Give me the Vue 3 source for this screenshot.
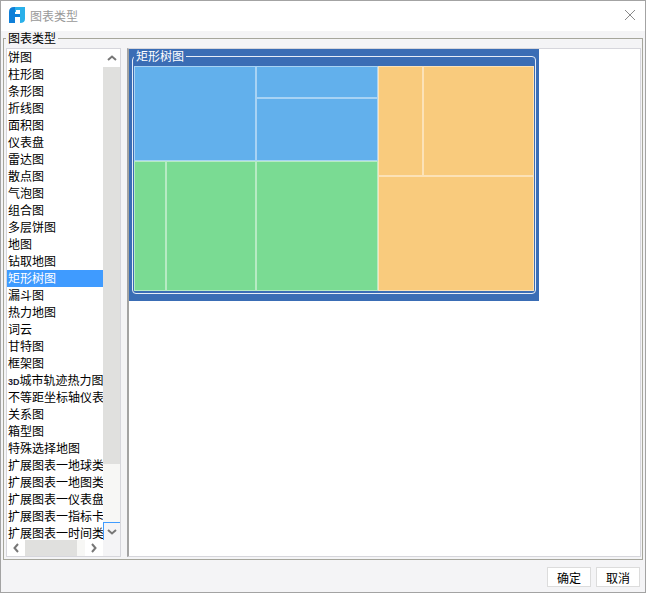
<template>
  <div class="dialog">
    <div class="titlebar">
      <svg class="logo" width="16" height="16" viewBox="0 0 16 16">
        <path d="M0 5 Q0 0 5 0 H6 V16 H0 Z" fill="#0f7fd8" />
        <path d="M6 7 H11 V10 H6 Z" fill="#0f7fd8" />
        <path d="M6 0 H16 V5 H6 Z" fill="#29b0ea" />
        <path d="M7 3 H11 V7 H7 Z" fill="#fff" />
        <path d="M11 3 H16 V12 Q16 16 11 16 Z" fill="#29b0ea" />
      </svg>
      <span class="title">图表类型</span>
      <svg class="close" width="12" height="12" viewBox="0 0 12 12">
        <path d="M1 1 L11 11 M11 1 L1 11" stroke="#8a8a8a" stroke-width="1" fill="none" />
      </svg>
    </div>

    <div class="content">
      <fieldset class="group">
        <legend>图表类型</legend>
        <div class="group-body">
          <div class="listbox">
            <div class="list-main">
              <ul class="items">
                <li v-for="name in chartTypes" :key="name" :class="{ selected: name === selected }">
                  <template v-if="name.startsWith('3D')"><span class="small">3D</span>{{ name.slice(2) }}</template>
                  <template v-else>{{ name }}</template>
                </li>
              </ul>
              <div class="vscroll">
                <div class="sb-btn">
                  <svg width="10" height="6" viewBox="0 0 10 6"><path d="M1 5 L5 1.5 L9 5" stroke="#777" stroke-width="2" fill="none" /></svg>
                </div>
                <div class="v-track"><div class="v-thumb"></div></div>
                <div class="sb-btn active">
                  <svg width="10" height="6" viewBox="0 0 10 6"><path d="M1 1 L5 4.5 L9 1" stroke="#777" stroke-width="2" fill="none" /></svg>
                </div>
              </div>
            </div>
            <div class="hscroll">
              <div class="h-btn">
                <svg width="6" height="10" viewBox="0 0 6 10"><path d="M5 1 L1.5 5 L5 9" stroke="#777" stroke-width="2" fill="none" /></svg>
              </div>
              <div class="h-track"><div class="h-thumb"></div></div>
              <div class="h-btn">
                <svg width="6" height="10" viewBox="0 0 6 10"><path d="M1 1 L4.5 5 L1 9" stroke="#777" stroke-width="2" fill="none" /></svg>
              </div>
              <div class="corner"></div>
            </div>
          </div>

          <div class="preview">
            <div class="thumb">
              <fieldset class="thumb-group">
                <legend>矩形树图</legend>
                <div class="treemap">
                  <div class="col col-left">
                    <div class="row blue-row">
                      <div class="cell blue w122"></div>
                      <div class="stack w122">
                        <div class="cell blue h32"></div>
                        <div class="cell blue grow"></div>
                      </div>
                    </div>
                    <div class="row green-row">
                      <div class="cell green w32"></div>
                      <div class="cell green w90"></div>
                      <div class="cell green w122"></div>
                    </div>
                  </div>
                  <div class="col col-right">
                    <div class="row orange-top">
                      <div class="cell orange w45"></div>
                      <div class="cell orange grow"></div>
                    </div>
                    <div class="cell orange grow"></div>
                  </div>
                </div>
              </fieldset>
            </div>
          </div>
        </div>
      </fieldset>
    </div>

    <div class="footer">
      <button class="btn">确定</button>
      <button class="btn">取消</button>
    </div>
  </div>
</template>

<script setup>
import { ref } from "vue";

const selected = ref("矩形树图");

const chartTypes = [
  "饼图",
  "柱形图",
  "条形图",
  "折线图",
  "面积图",
  "仪表盘",
  "雷达图",
  "散点图",
  "气泡图",
  "组合图",
  "多层饼图",
  "地图",
  "钻取地图",
  "矩形树图",
  "漏斗图",
  "热力地图",
  "词云",
  "甘特图",
  "框架图",
  "3D城市轨迹热力图",
  "不等距坐标轴仪表",
  "关系图",
  "箱型图",
  "特殊选择地图",
  "扩展图表一地球类",
  "扩展图表一地图类",
  "扩展图表一仪表盘",
  "扩展图表一指标卡",
  "扩展图表一时间类",
];
</script>

<style>
html,
body {
  margin: 0;
  background: #f4f4f6;
}
</style>

<style scoped>
.dialog {
  width: 646px;
  height: 593px;
  box-sizing: border-box;
  border: 1px solid #a3a3a3;
  background: #f4f4f6;
  display: flex;
  flex-direction: column;
  font-family: "Liberation Sans", "Noto Sans CJK SC", sans-serif;
  font-size: 12px;
  color: #000;
}

.titlebar {
  height: 30px;
  flex: none;
  box-sizing: border-box;
  background: #fff;
  display: flex;
  align-items: center;
  padding: 0 9px 2px 8px;
}

.logo {
  margin-right: 5px;
}

.title {
  color: #999;
  flex: 1;
}

.content {
  flex: 1;
  min-height: 0;
  padding: 0 2px;
  display: flex;
}

.group {
  flex: 1;
  min-width: 0;
  margin: 0;
  padding: 0;
  border: 1px solid #a6a69c;
}

.group > legend {
  margin-left: 2px;
  padding: 1px 2px 0;
  line-height: 14px;
  font-size: 12px;
}

.group-body {
  height: 512px;
  display: flex;
  gap: 6px;
  padding: 2px 1px 0 2px;
  box-sizing: border-box;
}

.listbox {
  width: 115px;
  height: 509px;
  box-sizing: border-box;
  border: 1px solid #d6d6dc;
  background: #fff;
  display: flex;
  flex-direction: column;
  flex: none;
}

.list-main {
  flex: 1;
  min-height: 0;
  display: flex;
}

.items {
  list-style: none;
  margin: 0;
  padding: 0;
  width: 96px;
  overflow: hidden;
}

.items li {
  height: 17px;
  box-sizing: border-box;
  line-height: 17px;
  padding: 1px 0 0 1px;
  white-space: nowrap;
  overflow: hidden;
}

.items li.selected {
  background: #3f9bff;
  color: #fff;
}

.small {
  font-size: 9px;
  font-weight: bold;
  color: #223;
}

.vscroll {
  width: 17px;
  display: flex;
  flex-direction: column;
  background: #f7f7f5;
}

.sb-btn {
  height: 18px;
  flex: none;
  box-sizing: border-box;
  background: #fff;
  display: flex;
  align-items: center;
  justify-content: center;
}

.sb-btn.active {
  background: #f4f4f6;
  border-top: 1px solid #3f9bff;
  border-left: 1px solid #3f9bff;
}

.v-track {
  flex: 1;
}

.v-thumb {
  height: 397px;
  background: #e0e0de;
}

.hscroll {
  height: 16px;
  flex: none;
  display: flex;
  background: #f7f7f5;
}

.h-btn {
  width: 18px;
  flex: none;
  background: #fff;
  display: flex;
  align-items: center;
  justify-content: center;
}

.h-track {
  width: 60px;
  flex: none;
}

.h-thumb {
  width: 52px;
  height: 100%;
  background: #e0e0de;
}

.corner {
  flex: 1;
  background: #f4f4f6;
}

.preview {
  flex: 1;
  min-width: 0;
  height: 509px;
  box-sizing: border-box;
  background: #fff;
  border-top: 1px solid #d6d6dc;
  border-right: 1px solid #d6d6dc;
  border-bottom: 1px solid #d6d6dc;
  border-left: 2px solid #a3a3a3;
}

.thumb {
  width: 410px;
  height: 252px;
  box-sizing: border-box;
  background: #3a6db5;
  padding: 0 3px 7px 3px;
  display: flex;
}

.thumb-group {
  flex: 1;
  min-width: 0;
  margin: 0;
  padding: 0 1px 1px 1px;
  border: 1px solid #e6edf7;
  border-radius: 4px;
}

.thumb-group > legend {
  margin-left: 0;
  padding: 1px 2px 0;
  line-height: 14px;
  color: #fff;
  font-size: 12px;
}

.treemap {
  display: flex;
  height: 225px;
  margin-top: 2px;
}

.col {
  display: flex;
  flex-direction: column;
}

.col-left {
  width: 244px;
}

.col-right {
  flex: 1;
}

.row {
  display: flex;
}

.blue-row {
  height: 95px;
}

.green-row {
  flex: 1;
}

.orange-top {
  height: 110px;
}

.stack {
  display: flex;
  flex-direction: column;
}

.cell {
  box-sizing: border-box;
  box-shadow: inset 0 0 0 1px rgba(255, 255, 255, 0.45);
}

.blue {
  background: #62b0ec;
}

.green {
  background: #7adb93;
}

.orange {
  background: #f9cb7d;
}

.grow {
  flex: 1;
}

.w32 {
  width: 32px;
}

.w45 {
  width: 45px;
}

.w90 {
  width: 90px;
}

.w122 {
  width: 122px;
}

.h32 {
  height: 32px;
}

.footer {
  height: 32px;
  flex: none;
  display: flex;
  justify-content: flex-end;
  align-items: flex-start;
  gap: 5px;
  padding: 7px 5px 0 0;
  box-sizing: border-box;
}

.btn {
  width: 44px;
  height: 20px;
  box-sizing: border-box;
  padding: 0;
  background: #fff;
  border: 1px solid #dcdcdc;
  font-family: inherit;
  font-size: 12px;
  color: #000;
}
</style>
